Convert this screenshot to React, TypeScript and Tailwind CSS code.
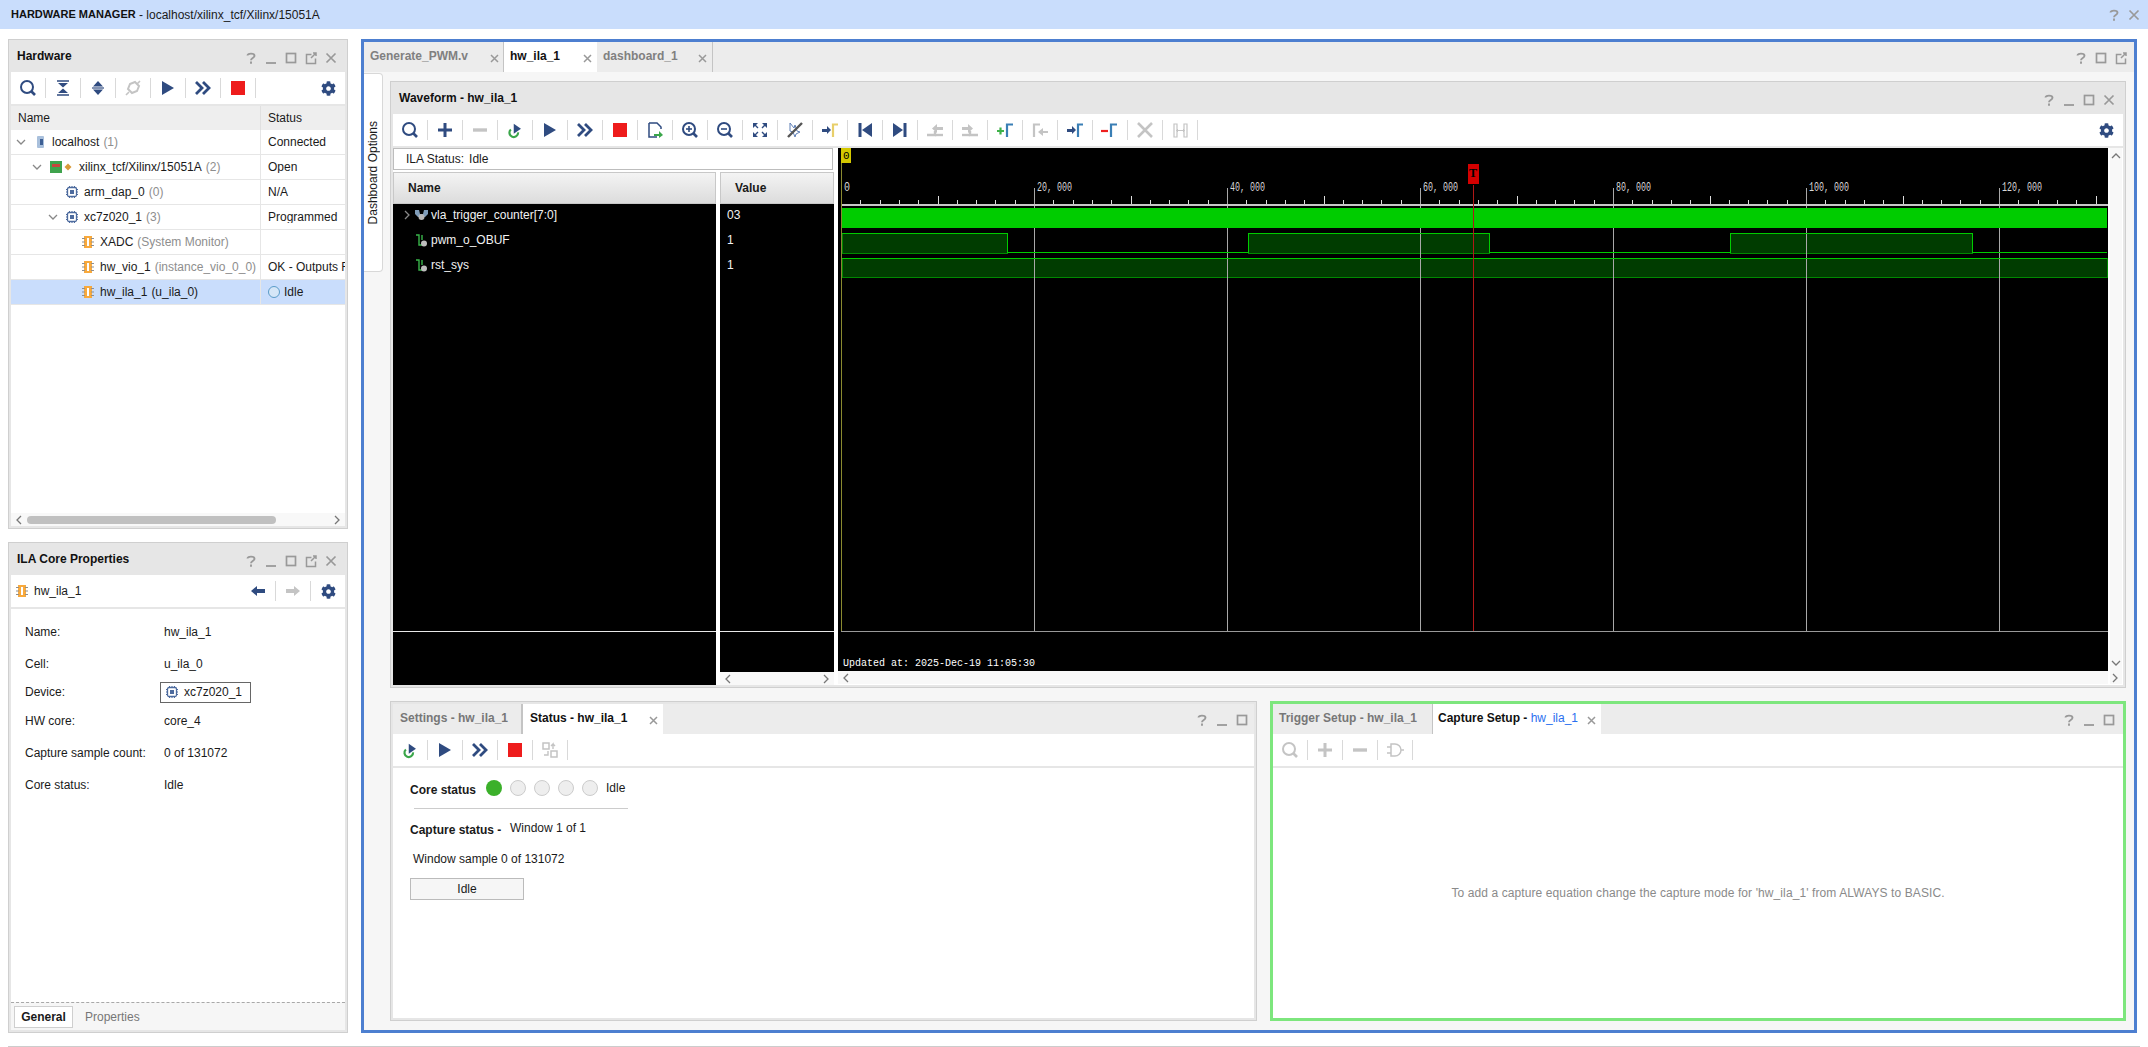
import type { ReactNode } from 'react'
import { FaCog } from 'react-icons/fa'

const NAVY = '#2f4b80'
const GRAY = '#c4c4c4'

function Ic({ children }: { children: ReactNode }) {
  return (
    <svg width="20" height="20" viewBox="0 0 20 20" fill="none">
      {children}
    </svg>
  )
}

function Search({ c = NAVY, sign }: { c?: string; sign?: '+' | '-' }) {
  return (
    <Ic>
      <circle cx="9" cy="9" r="6" stroke={c} strokeWidth="2" />
      <path d="M13.5 13.5L17 17" stroke={c} strokeWidth="2.6" />
      {sign && <path d="M6 9h6" stroke={c} strokeWidth="1.6" />}
      {sign === '+' && <path d="M9 6v6" stroke={c} strokeWidth="1.6" />}
    </Ic>
  )
}

const Plus = ({ c = NAVY }: { c?: string }) => (
  <Ic>
    <path d="M3 10h14M10 3v14" stroke={c} strokeWidth="3" />
  </Ic>
)
const Minus = ({ c = GRAY }: { c?: string }) => (
  <Ic>
    <path d="M3 10h14" stroke={c} strokeWidth="3.4" />
  </Ic>
)
const Play = () => (
  <Ic>
    <path d="M4 3l12 7-12 7z" fill={NAVY} />
  </Ic>
)
const Double = () => (
  <Ic>
    <path d="M3 4l6 6-6 6M10 4l6 6-6 6" stroke={NAVY} strokeWidth="2.8" />
  </Ic>
)
const Stop = () => (
  <Ic>
    <rect x="3" y="3" width="14" height="14" fill="#ee1c1c" />
  </Ic>
)
const Refresh = () => (
  <Ic>
    <g transform="translate(3 3) scale(0.72)">
      <path d="M4 9a6 6 0 1 0 10 4" stroke="#3aa64a" strokeWidth="3" />
      <path d="M8 1l10 7-10 7z" fill={NAVY} />
    </g>
  </Ic>
)
const Collapse = () => (
  <Ic>
    <path d="M4 3h12M4 17h12" stroke={NAVY} strokeWidth="1.6" />
    <path d="M5 5h10l-5 4.5zM5 15h10l-5-4.5z" fill={NAVY} />
  </Ic>
)
const Expand = () => (
  <Ic>
    <path d="M10 3l5 5.5H5zM10 17l-5-5.5h10z" fill={NAVY} />
    <path d="M4 10h12" stroke={NAVY} strokeWidth="1.2" />
  </Ic>
)
const Connect = () => (
  <Ic>
    <path d="M7 6l5-2 4 4-2 5-5 2-4-4z" stroke={GRAY} strokeWidth="2" />
    <path d="M3 17l3-3M14 6l3-3" stroke={GRAY} strokeWidth="1.6" />
  </Ic>
)
const Export = () => (
  <Ic>
    <path d="M4 3h8l4 4v2M4 3v14h8" stroke={NAVY} strokeWidth="1.5" />
    <path d="M9 14h5v-3l4 4-4 3v-2H9z" fill="#3aa64a" />
  </Ic>
)
const Fit = () => (
  <Ic>
    <path d="M3 3h5L3 8zM17 3v5l-5-5zM3 17v-5l5 5zM17 17h-5l5-5z" fill={NAVY} />
    <path d="M5 5l3 3M15 5l-3 3M5 15l3-3M15 15l-3-3" stroke={NAVY} strokeWidth="1.4" />
  </Ic>
)
const Cut = () => (
  <Ic>
    <path d="M5 3l4 5 1-3 2 6 3 1-4 2-1 3-2-5-3-1z" stroke="#5f7fb5" strokeWidth="1" />
    <path d="M3 17L17 3" stroke="#555" strokeWidth="2.4" />
  </Ic>
)
const ToMarker = ({ c, arrow = NAVY }: { c: string; arrow?: string }) => (
  <Ic>
    <path d="M2 10h5V7l4 4-4 4v-2H2z" fill={arrow} transform="translate(0 -1)" />
    <path d="M13 17V4.5h5" stroke={c} strokeWidth="2.2" />
  </Ic>
)
const Prev = () => (
  <Ic>
    <path d="M5 3v14" stroke={NAVY} strokeWidth="3" />
    <path d="M17 3v14l-10-7z" fill={NAVY} />
  </Ic>
)
const Next = () => (
  <Ic>
    <path d="M15 3v14" stroke={NAVY} strokeWidth="3" />
    <path d="M3 3v14l10-7z" fill={NAVY} />
  </Ic>
)
const StepL = () => (
  <Ic>
    <path d="M2 15h8v-4" stroke={GRAY} strokeWidth="2.4" />
    <path d="M18 7v3h-6v3L7 8.5 12 4v3z" fill={GRAY} />
    <path d="M10 15h8" stroke={GRAY} strokeWidth="2.4" />
  </Ic>
)
const StepR = () => (
  <Ic>
    <path d="M18 15h-8v-4" stroke={GRAY} strokeWidth="2.4" />
    <path d="M2 7v3h6v3l5-4.5L8 4v3z" fill={GRAY} />
    <path d="M10 15H2" stroke={GRAY} strokeWidth="2.4" />
  </Ic>
)
const AddMark = () => (
  <Ic>
    <path d="M2 11h7M5.5 7.5v7" stroke="#3fb24a" strokeWidth="2.2" />
    <path d="M12 17V4.5h6" stroke="#3a7fb5" strokeWidth="2.2" />
  </Ic>
)
const BackMark = () => (
  <Ic>
    <path d="M4 17V4.5h6" stroke={GRAY} strokeWidth="2.2" />
    <path d="M18 12h-5V9l-5 4 5 4v-3h5z" fill={GRAY} transform="translate(0 -1)" />
  </Ic>
)
const DelMark = () => (
  <Ic>
    <path d="M1 11h7" stroke="#ee2020" strokeWidth="2.2" />
    <path d="M11 17V4.5h6" stroke="#3a7fb5" strokeWidth="2.2" />
  </Ic>
)
const Cross = () => (
  <Ic>
    <path d="M3 3l14 14M17 3L3 17" stroke={GRAY} strokeWidth="2.6" />
  </Ic>
)
const Measure = () => (
  <Ic>
    <path d="M4 4h3v13H4zM14 4h3v13h-3z" stroke={GRAY} strokeWidth="1.2" />
    <path d="M7 10.5h7M8 9l-1.5 1.5L8 12M13 9l1.5 1.5L13 12" stroke={GRAY} strokeWidth="1" />
  </Ic>
)
const Swap = () => (
  <Ic>
    <path d="M3 3h6v6H3zM11 11h6v6h-6z" stroke={GRAY} strokeWidth="1.5" />
    <path d="M13 9V4l-2 2M13 4l2 2M8 11v4H4" stroke={GRAY} strokeWidth="1.4" />
  </Ic>
)
const Gate = () => (
  <Ic>
    <path d="M6 4h4a6 6 0 0 1 0 12H6zM2 7h4M2 13h4M16 10h3" stroke={GRAY} strokeWidth="1.5" />
  </Ic>
)
const ArrowLeft = ({ c }: { c: string }) => (
  <Ic>
    <path d="M3 10l6-5v3h8v4H9v3z" fill={c} />
  </Ic>
)
const ArrowRight = ({ c }: { c: string }) => (
  <Ic>
    <path d="M17 10l-6-5v3H3v4h8v3z" fill={c} />
  </Ic>
)

function Chip() {
  return (
    <svg width="12" height="12" viewBox="0 0 12 12" fill="none" className="shrink-0">
      <rect x="1.5" y="1.5" width="9" height="9" rx="1.5" stroke="#4d6b9e" strokeWidth="1.3" />
      <rect x="4" y="4" width="4" height="4" fill="#4d6b9e" />
      <path d="M3.5 0v1.5M6 0v1.5M8.5 0v1.5M3.5 10.5V12M6 10.5V12M8.5 10.5V12M0 3.5h1.5M0 6h1.5M0 8.5h1.5M10.5 3.5H12M10.5 6H12M10.5 8.5H12" stroke="#4d6b9e" />
    </svg>
  )
}

function Ila() {
  return (
    <svg width="12" height="12" viewBox="0 0 12 12" className="shrink-0">
      <rect x="2" y="0" width="8" height="12" fill="#f8a93c" />
      <rect x="5" y="2" width="2" height="8" fill="#fff" />
      <path d="M0 2.5h3M0 6h3M0 9.5h3M9 2.5h3M9 6h3M9 9.5h3" stroke="#8f8f8f" />
    </svg>
  )
}

function HostIcon() {
  return (
    <svg width="8" height="12" viewBox="0 0 8 12" className="shrink-0">
      <rect x="0" y="0" width="7" height="12" rx="1" fill="#a9c0dc" />
      <rect x="3" y="3" width="3" height="6" fill="#3d5f94" />
    </svg>
  )
}

function TargetIcon() {
  return (
    <svg width="22" height="12" viewBox="0 0 22 12" className="shrink-0">
      <rect x="0" y="0" width="12" height="12" fill="#3fa34d" />
      <rect x="2" y="3" width="8" height="3" fill="#c9453c" />
      <path d="M18 2.5l3.5 3.5-3.5 3.5L14.5 6z" fill="#d99a3a" />
    </svg>
  )
}

function Chevron({ dir = 'down', c = '#888' }: { dir?: 'down' | 'right' | 'left' | 'up'; c?: string }) {
  const d = {
    down: 'M1 3l4 4 4-4',
    up: 'M1 7l4-4 4 4',
    right: 'M3 1l4 4-4 4',
    left: 'M7 1L3 5l4 4',
  }[dir]
  return (
    <svg width="10" height="10" viewBox="0 0 10 10" fill="none" className="shrink-0">
      <path d={d} stroke={c} strokeWidth="1.3" />
    </svg>
  )
}

function ScrollArrow({ dir }: { dir: 'left' | 'right' | 'up' | 'down' }) {
  return <Chevron dir={dir} c="#777" />
}

function SignalIcon({ bus }: { bus?: boolean }) {
  return bus ? (
    <svg width="13" height="12" viewBox="0 0 13 12" className="shrink-0">
      <path d="M0 1h4l1 4h3l1-4h4v4l-3 3H3L0 5z" fill="#7f9cb8" />
      <circle cx="6.5" cy="8" r="3" fill="#b8b8b8" />
    </svg>
  ) : (
    <svg width="12" height="13" viewBox="0 0 12 13" fill="none" className="shrink-0">
      <path d="M0 1h3v10h3" stroke="#39b54a" strokeWidth="1.4" />
      <path d="M6 1v5" stroke="#39b54a" strokeWidth="1.4" />
      <circle cx="8" cy="9.5" r="3" fill="#bdbdbd" />
    </svg>
  )
}

function WinIcons({ items, className }: { items: string; className: string }) {
  return (
    <div className={`ml-auto flex items-center ${className}`}>
      {items.split('').map((k, i) => (
        <svg key={i} width="20" height="14" viewBox="0 0 20 14" fill="none">
          {k === '?' && (
            <path d="M6.5 4.5C6.5 2 13.5 2 13.5 4.8c0 2.2-3.5 2.2-3.5 4.4M10 10.5v2.2" stroke="#999" strokeWidth="1.9" />
          )}
          {k === '_' && <path d="M5 12h10" stroke="#999" strokeWidth="1.8" />}
          {k === 'o' && <rect x="5.5" y="2.5" width="9" height="9" stroke="#999" strokeWidth="1.7" />}
          {k === 'e' && (
            <path d="M14.5 7.5v5h-9v-9h5M10 7l5-5M12 2h3v3" stroke="#999" strokeWidth="1.5" />
          )}
          {k === 'x' && <path d="M5.5 2.5l9 9M14.5 2.5l-9 9" stroke="#999" strokeWidth="1.7" />}
        </svg>
      ))}
    </div>
  )
}

function TabClose({ className }: { className: string }) {
  return (
    <svg width="9" height="9" viewBox="0 0 9 9" fill="none" className={`ml-auto mt-1 shrink-0 ${className}`}>
      <path d="M1 1l7 7M8 1L1 8" stroke="#999" strokeWidth="1.5" />
    </svg>
  )
}

function Toolbar({ items, right }: { items: ReactNode[]; right?: ReactNode }) {
  return (
    <div className="h-8 shrink-0 bg-white flex items-center">
      {items.map((it, i) => (
        <div key={i} className="w-[35px] h-5 flex items-center justify-center border-r border-[#d9d9d9]">
          {it}
        </div>
      ))}
      {right}
    </div>
  )
}

function Gear() {
  return (
    <div className="ml-auto w-[34px] flex items-center justify-center">
      <FaCog size={15} color={NAVY} />
    </div>
  )
}

function Frame({ className, children }: { className: string; children: ReactNode }) {
  return (
    <div className={`border border-[#cfcfcf] ${className}`}>
      <div className="h-full border-2 border-[#e6e6e6] flex flex-col bg-white">{children}</div>
    </div>
  )
}

function PanelHeader({ title, items }: { title: string; items: string }) {
  return (
    <div className="h-[30px] shrink-0 bg-[#e6e6e6] flex items-center pl-1.5 pb-0.5 font-bold text-[#111]">
      {title}
      <WinIcons items={items} className="pr-1 pt-1 font-normal" />
    </div>
  )
}

const rows = [
  { pad: 'pl-[5px]', chev: true, icon: <HostIcon />, gap: 'ml-[11px] mr-[7px]', name: 'localhost', extra: '(1)', status: 'Connected' },
  { pad: 'pl-[21px]', chev: true, icon: <TargetIcon />, gap: 'ml-[8px] mr-[7px]', name: 'xilinx_tcf/Xilinx/15051A', extra: '(2)', status: 'Open' },
  { pad: 'pl-[55px]', icon: <Chip />, gap: 'mr-[6px]', name: 'arm_dap_0', extra: '(0)', status: 'N/A' },
  { pad: 'pl-[37px]', chev: true, icon: <Chip />, gap: 'ml-[8px] mr-[6px]', name: 'xc7z020_1', extra: '(3)', status: 'Programmed' },
  { pad: 'pl-[71px]', icon: <Ila />, gap: 'mr-[6px]', name: 'XADC', extra: '(System Monitor)', status: '' },
  { pad: 'pl-[71px]', icon: <Ila />, gap: 'mr-[6px]', name: 'hw_vio_1', extra: '(instance_vio_0_0)', status: 'OK - Outputs Reset' },
  { pad: 'pl-[71px]', icon: <Ila />, gap: 'mr-[6px]', name: 'hw_ila_1', extra: '(u_ila_0)', status: 'Idle', selected: true },
]

function HardwarePanel() {
  return (
    <Frame className="h-[490px] shrink-0">
      <PanelHeader title="Hardware" items="?_oex" />
      <Toolbar
        items={[<Search />, <Collapse />, <Expand />, <Connect />, <Play />, <Double />, <Stop />]}
        right={<Gear />}
      />
      <div className="h-0.5 shrink-0 bg-[#e6e6e6]" />
      <div className="h-6 shrink-0 bg-[#eeeeee] flex items-center">
        <div className="w-[250px] h-full flex items-center pl-[7px] border-r border-[#e0e0e0]">Name</div>
        <div className="pl-[7px]">Status</div>
      </div>
      {rows.map((r) => (
        <div
          key={r.name}
          className={`h-[25px] shrink-0 flex items-center border-b border-[#e6e6e6] ${r.selected ? 'bg-[#c9ddfc]' : 'bg-white'}`}
        >
          <div className={`w-[250px] h-full flex items-center whitespace-nowrap overflow-hidden border-r border-[#e6e6e6] ${r.pad}`}>
            {r.chev && <Chevron />}
            <span className={r.gap}>{r.icon}</span>
            <span>{r.name}</span>
            <span className={`ml-1 ${r.selected ? '' : 'text-[#8e8e8e]'}`}>{r.extra}</span>
          </div>
          <div className="flex-1 min-w-0 pl-[7px] flex items-center whitespace-nowrap overflow-hidden">
            {r.selected && <span className="w-3 h-3 rounded-full border border-[#5a9bc8] mr-1 bg-[#d5e6f7]" />}
            {r.status}
          </div>
        </div>
      ))}
      <div className="flex-1" />
      <div className="h-[13px] shrink-0 bg-[#f8f8f8] flex items-center px-[3px] gap-[3px]">
        <ScrollArrow dir="left" />
        <div className="w-[249px] h-2 rounded bg-[#c0c0c0]" />
        <div className="ml-auto"><ScrollArrow dir="right" /></div>
      </div>
    </Frame>
  )
}

function PropRow({ label, children, className }: { label: string; children: ReactNode; className: string }) {
  return (
    <div className={`flex items-center h-5 ${className}`}>
      <div className="w-[139px]">{label}</div>
      {children}
    </div>
  )
}

function PropertiesPanel() {
  return (
    <Frame className="flex-1 min-h-0">
      <PanelHeader title="ILA Core Properties" items="?_oex" />
      <div className="h-8 shrink-0 flex items-center pl-[5px]">
        <Ila />
        <span className="ml-[6px]">hw_ila_1</span>
        <div className="ml-auto w-[35px] h-5 flex items-center justify-center border-r border-[#d9d9d9]">
          <ArrowLeft c={NAVY} />
        </div>
        <div className="w-[35px] h-5 flex items-center justify-center border-r border-[#d9d9d9]">
          <ArrowRight c={GRAY} />
        </div>
        <div className="w-[34px] flex items-center justify-center">
          <FaCog size={15} color={NAVY} />
        </div>
      </div>
      <div className="h-0.5 shrink-0 bg-[#e6e6e6]" />
      <div className="flex-1 pl-3.5 pt-[13px]">
        <PropRow label="Name:" className=""><span>hw_ila_1</span></PropRow>
        <PropRow label="Cell:" className="mt-3"><span>u_ila_0</span></PropRow>
        <PropRow label="Device:" className="mt-2">
          <div className="-ml-1 w-[91px] h-[21px] border border-[#666] flex items-center pl-[5px] gap-[6px]">
            <Chip />
            xc7z020_1
          </div>
        </PropRow>
        <PropRow label="HW core:" className="mt-[9px]"><span>core_4</span></PropRow>
        <PropRow label="Capture sample count:" className="mt-3"><span>0 of 131072</span></PropRow>
        <PropRow label="Core status:" className="mt-3"><span>Idle</span></PropRow>
      </div>
      <div className="h-7 shrink-0 bg-[#f6f6f6] border-t border-dashed border-[#a8a8a8] flex items-start pt-[3px] pl-[3px]">
        <div className="w-[59px] h-[22px] border border-[#cfcfcf] bg-white flex items-center justify-center font-bold">General</div>
        <div className="ml-3 h-[22px] flex items-center text-[#777]">Properties</div>
      </div>
    </Frame>
  )
}

function WaveCanvas() {
  const ticks = Array.from({ length: 66 }, (_, i) => i)
  const majors = [1034, 1227, 1420, 1613, 1806, 1999]
  const labels = [
    { x: 1037, t: '20, 000', w: 35 },
    { x: 1230, t: '40, 000', w: 35 },
    { x: 1423, t: '60, 000', w: 35 },
    { x: 1616, t: '80, 000', w: 35 },
    { x: 1809, t: '100, 000', w: 40 },
    { x: 2002, t: '120, 000', w: 40 },
  ]
  return (
    <svg width="1270" height="523" viewBox="838 148 1270 523" className="block bg-black" shapeRendering="crispEdges">
      {ticks.map((i) => {
        const x = Math.round(841 + 19.3 * i) + 0.5
        if (i % 10 === 0) return null
        return <line key={i} x1={x} x2={x} y1={i % 5 === 0 ? 196 : 200} y2={204} stroke="#dcdcdc" />
      })}
      <rect x="842" y="233" width="165" height="20" fill="#003c00" stroke="#008800" />
      <rect x="1248" y="233" width="241" height="20" fill="#003c00" stroke="#008800" />
      <rect x="1730" y="233" width="242" height="20" fill="#003c00" stroke="#008800" />
      <rect x="842" y="258" width="1265" height="19" fill="#003c00" stroke="#008800" />
      {majors.map((x) => (
        <line key={x} x1={x + 0.5} x2={x + 0.5} y1={188} y2={631} stroke="#a8a8a8" />
      ))}
      <path
        d="M841 233.5H1007.5V252.5H1248.5V233.5H1489.5V252.5H1730.5V233.5H1972.5V252.5H2107M841 258.5H2107"
        stroke="#00cc00"
        fill="none"
      />
      <rect x="841" y="204" width="1267" height="2" fill="#c8c8c8" />
      <rect x="841" y="208" width="1266" height="20" fill="#00cc00" />
      <rect x="841" y="631" width="1267" height="1" fill="#999999" />
      <line x1="841.5" x2="841.5" y1="163" y2="631" stroke="#8a8a30" />
      <line x1="1473.5" x2="1473.5" y1="185" y2="631" stroke="#b01818" />
      <rect x="841" y="148" width="10" height="15" fill="#d4c800" />
      <text x="843" y="159" fontSize="11" fontFamily="'Liberation Mono', monospace" fill="#000">0</text>
      <rect x="1468" y="164" width="11" height="20" fill="#d40000" />
      <text x="1469" y="177" fontSize="12" fontWeight="700" fontFamily="'Liberation Serif', serif" fill="#000">T</text>
      <text x="844" y="191" fontSize="12" fontFamily="'Liberation Mono', monospace" fill="#d8d8d8" textLength="6" lengthAdjust="spacingAndGlyphs">0</text>
      {labels.map((l) => (
        <text key={l.x} x={l.x} y="191" fontSize="12" fontFamily="'Liberation Mono', monospace" fill="#d8d8d8" textLength={l.w} lengthAdjust="spacingAndGlyphs">
          {l.t}
        </text>
      ))}
      <text x="843" y="666" fontSize="10" fontFamily="'Liberation Mono', monospace" fill="#ffffff">
        Updated at: 2025-Dec-19 11:05:30
      </text>
    </svg>
  )
}

function WaveformPanel() {
  const names = [
    { bus: true, name: 'vla_trigger_counter[7:0]', value: '03' },
    { name: 'pwm_o_OBUF', value: '1' },
    { name: 'rst_sys', value: '1' },
  ]
  return (
    <Frame className="h-[607px] shrink-0">
      <div className="h-[30px] shrink-0 bg-[#e6e6e6] flex items-center pl-1.5 pb-0.5 font-bold text-[#111]">
        Waveform - hw_ila_1
        <WinIcons items="?_ox" className="pr-1 pt-1 font-normal" />
      </div>
      <Toolbar
        items={[
          <Search />, <Plus />, <Minus />, <Refresh />, <Play />, <Double />, <Stop />, <Export />,
          <Search sign="+" />, <Search sign="-" />, <Fit />, <Cut />, <ToMarker c="#e8cf6a" />,
          <Prev />, <Next />, <StepL />, <StepR />, <AddMark />, <BackMark />, <ToMarker c="#3a7fb5" />,
          <DelMark />, <Cross />, <Measure />,
        ]}
        right={<Gear />}
      />
      <div className="h-0.5 shrink-0 bg-[#e6e6e6]" />
      <div className="flex-1 min-h-0 flex">
        <div className="w-[441px] shrink-0 flex flex-col">
          <div className="w-[440px] h-[22px] shrink-0 border border-[#bdbdbd] flex items-center pl-3">
            ILA Status:<span className="ml-[5px]">Idle</span>
          </div>
          <div className="flex-1 min-h-0 flex gap-1 mt-0.5">
            <div className="w-[323px] flex flex-col">
              <div className="h-8 shrink-0 bg-gradient-to-b from-[#f4f4f4] to-[#dcdcdc] border border-[#c8c8c8] flex items-center pl-[14px] font-bold">Name</div>
              <div className="flex-1 bg-black text-[#f2f2f2] flex flex-col relative">
                {names.map((n) => (
                  <div key={n.name} className="h-[25px] flex items-center pl-[9px] pb-[3px]">
                    {n.bus ? <Chevron dir="right" /> : <span className="w-[10px]" />}
                    <span className={n.bus ? 'ml-[3px] mr-[3px]' : 'ml-1 mr-[3px]'}><SignalIcon bus={n.bus} /></span>
                    {n.name}
                  </div>
                ))}
                <div className="absolute left-0 right-0 top-[427px] h-px bg-[#e8e8e8]" />
              </div>
            </div>
            <div className="w-[114px] flex flex-col">
              <div className="h-8 shrink-0 bg-gradient-to-b from-[#f4f4f4] to-[#dcdcdc] border border-[#c8c8c8] flex items-center pl-[14px] font-bold">Value</div>
              <div className="flex-1 bg-black text-[#f2f2f2] flex flex-col relative">
                {names.map((n) => (
                  <div key={n.name} className="h-[25px] flex items-center pl-[7px] pb-[3px]">{n.value}</div>
                ))}
                <div className="absolute left-0 right-0 top-[427px] h-px bg-[#e8e8e8]" />
              </div>
              <div className="h-[13px] shrink-0 bg-[#f8f8f8] flex items-center justify-between px-[3px]">
                <ScrollArrow dir="left" />
                <ScrollArrow dir="right" />
              </div>
            </div>
          </div>
        </div>
        <div className="w-[1270px] shrink-0 ml-1 flex flex-col">
          <WaveCanvas />
          <div className="h-[13px] shrink-0 bg-[#f8f8f8] flex items-center px-[3px]">
            <ScrollArrow dir="left" />
          </div>
        </div>
        <div className="w-[12px] shrink-0 ml-0.5 flex flex-col">
          <div className="h-[523px] bg-[#f8f8f8] flex flex-col items-center justify-between py-[3px]">
            <ScrollArrow dir="up" />
            <ScrollArrow dir="down" />
          </div>
          <div className="h-[13px] flex items-center bg-[#f8f8f8]">
            <ScrollArrow dir="right" />
          </div>
        </div>
      </div>
    </Frame>
  )
}

function StatusPanel() {
  return (
    <Frame className="w-[867px] shrink-0">
      <div className="h-[30px] shrink-0 bg-[#ececec] flex items-center">
        <div className="w-[128px] h-full flex items-center pl-[7px] pb-0.5 font-bold text-[#777]">Settings - hw_ila_1</div>
        <div className="w-0.5 h-full bg-[#c4c4c4]" />
        <div className="w-[140px] h-full bg-white flex items-center pl-[7px] pb-0.5 font-bold text-[#111]">
          Status - hw_ila_1
          <TabClose className="mr-[5px]" />
        </div>
        <WinIcons items="?_o" className="pr-0.5 pt-0.5" />
      </div>
      <Toolbar items={[<Refresh />, <Play />, <Double />, <Stop />, <Swap />]} />
      <div className="h-0.5 shrink-0 bg-[#e6e6e6]" />
      <div className="flex-1 pl-[17px] pt-3">
        <div className="flex items-center h-[16px]">
          <span className="w-[76px] font-bold pt-[3px]">Core status</span>
          <span className="w-4 h-4 rounded-full bg-[#3bb02a] mr-2" />
          <span className="w-4 h-4 rounded-full bg-[#eeeeee] border border-[#cccccc] mr-2" />
          <span className="w-4 h-4 rounded-full bg-[#eeeeee] border border-[#cccccc] mr-2" />
          <span className="w-4 h-4 rounded-full bg-[#eeeeee] border border-[#cccccc] mr-2" />
          <span className="w-4 h-4 rounded-full bg-[#eeeeee] border border-[#cccccc] mr-2" />
          <span>Idle</span>
        </div>
        <div className="ml-1 mt-3 w-[214px] h-px bg-[#cccccc]" />
        <div className="flex items-center mt-[11px] h-4">
          <span className="w-[100px] font-bold pt-[3px]">Capture status -</span>
          <span>Window 1 of 1</span>
        </div>
        <div className="ml-[3px] mt-[13px] h-5 flex items-center">Window sample 0 of 131072</div>
        <div className="mt-[9px] w-[114px] h-[22px] border border-[#bbbbbb] bg-[#f6f6f6] flex items-center justify-center">Idle</div>
      </div>
    </Frame>
  )
}

function CapturePanel() {
  return (
    <div className="flex-1 min-w-0 border-[3px] border-[#7de67d] flex flex-col bg-white">
      <div className="h-[30px] shrink-0 bg-[#ececec] flex items-center">
        <div className="w-[159px] h-full flex items-center pl-1.5 pb-0.5 font-bold text-[#777]">Trigger Setup - hw_ila_1</div>
        <div className="w-px h-full bg-[#c4c4c4]" />
        <div className="w-[168px] h-full bg-white flex items-center pl-[5px] pb-0.5 font-bold text-[#111] whitespace-nowrap">
          Capture Setup -&nbsp;<span className="font-normal text-[#2a6ff0]">hw_ila_1</span>
          <TabClose className="mr-[5px]" />
        </div>
        <WinIcons items="?_o" className="pr-1 pt-0.5" />
      </div>
      <Toolbar items={[<Search c={GRAY} />, <Plus c={GRAY} />, <Minus />, <Gate />]} />
      <div className="h-0.5 shrink-0 bg-[#e6e6e6]" />
      <div className="flex-1 flex items-center justify-center text-[#8a8a8a] tracking-[0.1px]">
        To add a capture equation change the capture mode for 'hw_ila_1' from ALWAYS to BASIC.
      </div>
    </div>
  )
}

export default function App() {
  return (
    <div className="w-[2148px] h-[1047px] bg-white flex flex-col overflow-hidden text-[12px] leading-none text-[#1a1a1a] font-['Liberation_Sans',Arial,sans-serif]">
      <div className="h-[29px] shrink-0 bg-[#c9ddfc] flex items-center pl-[11px]">
        <span className="font-bold text-[11px] text-[#111]">HARDWARE MANAGER</span>
        <span>&nbsp;- localhost/xilinx_tcf/Xilinx/15051A</span>
        <WinIcons items="?x" className="pr-1" />
      </div>

      <div className="h-[994px] shrink-0 mt-2.5 ml-2 flex gap-[13px]">
        <div className="w-[340px] shrink-0 flex flex-col gap-[13px]">
          <HardwarePanel />
          <PropertiesPanel />
        </div>

        <div className="w-[1776px] shrink-0 border-[3px] border-[#4d7fd0] bg-[#f6f6f6] flex flex-col">
          {/* Editor tabs */}
          <div className="h-[30px] shrink-0 bg-[#ececec] flex items-center">
            <div className="w-[139px] h-full flex items-center pl-1.5 pb-0.5 font-bold text-[#808080]">
              Generate_PWM.v
              <TabClose className="mr-1" />
            </div>
            <div className="w-px h-full bg-[#c4c4c4]" />
            <div className="w-[93px] h-full bg-white flex items-center pl-1.5 pb-0.5 font-bold text-[#111]">
              hw_ila_1
              <TabClose className="mr-[5px]" />
            </div>
            <div className="w-[115px] h-full flex items-center pl-1.5 pb-0.5 font-bold text-[#808080]">
              dashboard_1
              <TabClose className="mr-[5px]" />
            </div>
            <div className="w-px h-full bg-[#c4c4c4]" />
            <WinIcons items="?oe" className="pr-[3px] pt-0.5" />
          </div>

          <div className="flex-1 min-h-0 flex">
            <div className="w-[19px] h-[199px] mt-px bg-white border border-l-0 border-[#d8d8d8] rounded-r flex items-center justify-center">
              <span className="[writing-mode:vertical-rl] rotate-180 whitespace-nowrap">Dashboard Options</span>
            </div>
            <div className="w-[1736px] ml-[7px] pt-[9px] flex flex-col gap-[13px]">
              <WaveformPanel />
              <div className="h-[320px] shrink-0 flex gap-[13px]">
                <StatusPanel />
                <CapturePanel />
              </div>
            </div>
          </div>
        </div>
      </div>

      <div className="mt-[13px] mx-2 h-px bg-[#cccccc]" />
    </div>
  )
}
